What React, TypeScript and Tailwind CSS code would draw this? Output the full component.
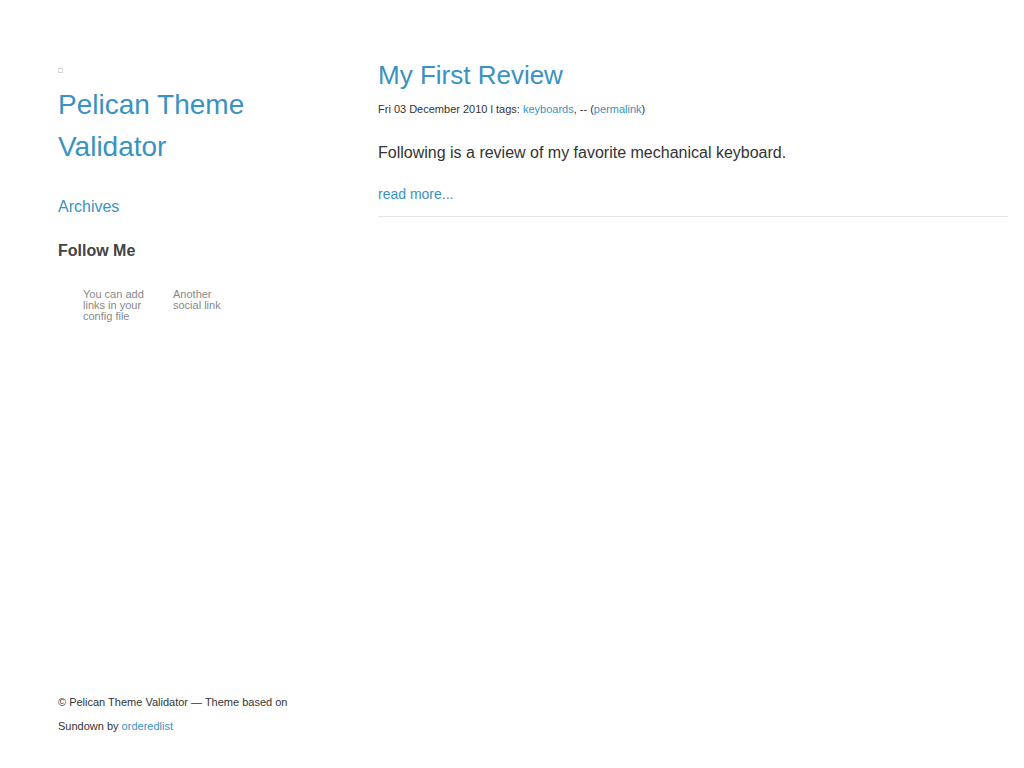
import React from 'react';

const blue = 'text-[#3a92c1]';

export default function App() {
  return (
    <div className="flex min-h-[768px] flex-col bg-white pl-[58px] pr-4 font-['Liberation_Sans',Arial,sans-serif] text-[#333]">
      <div className="flex pt-[68px]">
        {/* Sidebar */}
        <aside className="w-[320px] shrink-0 pr-[60px]">
          <div className="h-[5px] w-[5px] border border-[#d6d6d6]" />
          <h1 className={`mt-[11px] text-[28px] leading-[42px] ${blue}`}>
            <a href="#">Pelican Theme Validator</a>
          </h1>
          <nav className="mt-[27px]">
            <a href="#" className={`text-[16px] leading-[20px] ${blue}`}>Archives</a>
          </nav>
          <h3 className="mt-[22px] text-[16px] font-bold leading-[20px] text-[#444]">Follow Me</h3>
          <ul className="mt-[28px] flex gap-[26px] pl-[25px] text-[11px] leading-[11px] text-[#888]">
            <li className="w-[64px]">You can add links in your config file</li>
            <li className="w-[64px]">Another social link</li>
          </ul>
        </aside>

        {/* Main */}
        <main className="flex-1">
          <article className="border-b border-[#e5e5e5] pb-[13px]">
            <h2 className={`-mt-[11px] text-[26px] leading-[36px] ${blue}`}>
              <a href="#">My First Review</a>
            </h2>
            <p className="mt-[8px] text-[11px] leading-[16px] text-[#333]">
              Fri 03 December 2010 l tags: <a href="#" className={blue}>keyboards</a>, -- (
              <a href="#" className={blue}>permalink</a>)
            </p>
            <p className="mt-[26px] text-[16px] leading-[20px] text-[#333]">
              Following is a review of my favorite mechanical keyboard.
            </p>
            <a href="#" className={`mt-[22px] block text-[14px] leading-[18px] ${blue}`}>read more...</a>
          </article>
        </main>
      </div>

      <footer className="mt-auto mb-[30px] w-[240px] text-[11px] leading-[24px] text-[#333]">
        <p>© Pelican Theme Validator — Theme based on</p>
        <p>
          Sundown by <a href="#" className={blue}>orderedlist</a>
        </p>
      </footer>
    </div>
  );
}
